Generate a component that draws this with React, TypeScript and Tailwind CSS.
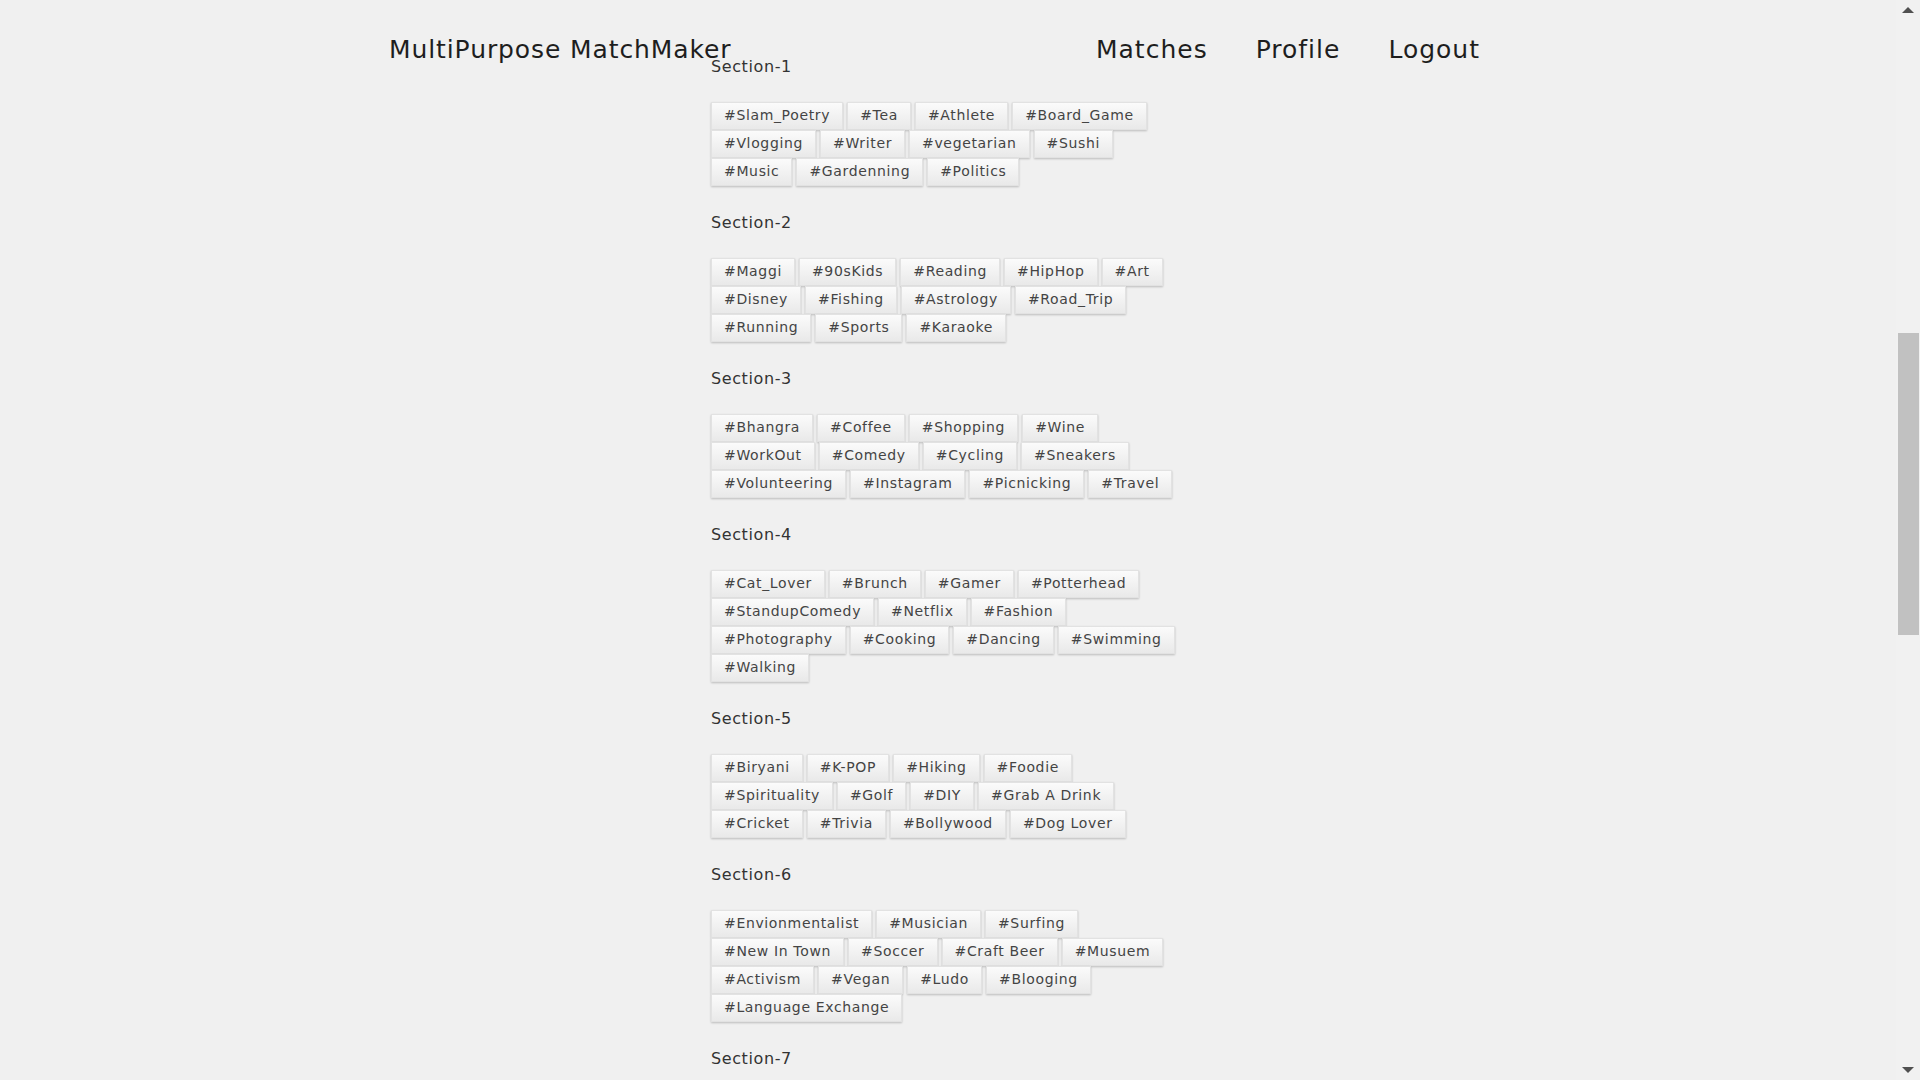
import React from "react";

const sections: string[][] = [
  ["#Slam_Poetry", "#Tea", "#Athlete", "#Board_Game", "#Vlogging", "#Writer", "#vegetarian", "#Sushi", "#Music", "#Gardenning", "#Politics"],
  ["#Maggi", "#90sKids", "#Reading", "#HipHop", "#Art", "#Disney", "#Fishing", "#Astrology", "#Road_Trip", "#Running", "#Sports", "#Karaoke"],
  ["#Bhangra", "#Coffee", "#Shopping", "#Wine", "#WorkOut", "#Comedy", "#Cycling", "#Sneakers", "#Volunteering", "#Instagram", "#Picnicking", "#Travel"],
  ["#Cat_Lover", "#Brunch", "#Gamer", "#Potterhead", "#StandupComedy", "#Netflix", "#Fashion", "#Photography", "#Cooking", "#Dancing", "#Swimming", "#Walking"],
  ["#Biryani", "#K-POP", "#Hiking", "#Foodie", "#Spirituality", "#Golf", "#DIY", "#Grab A Drink", "#Cricket", "#Trivia", "#Bollywood", "#Dog Lover"],
  ["#Envionmentalist", "#Musician", "#Surfing", "#New In Town", "#Soccer", "#Craft Beer", "#Musuem", "#Activism", "#Vegan", "#Ludo", "#Blooging", "#Language Exchange"],
  [],
];

const font = { fontFamily: '"DejaVu Sans", "Liberation Sans", sans-serif' };

export default function App() {
  return (
    <div className="w-[1920px] h-[1080px] overflow-hidden bg-[#f0f0f0] flex" style={font}>
      <main className="flex-1 flex flex-col">
        <header className="h-[65px] pt-[34px] pl-[389px] pr-[416px] flex justify-between items-start relative z-10">
          <div className="text-[25px] leading-[32px] tracking-[0.9px] text-[#1e1e1e]">MultiPurpose MatchMaker</div>
          <nav className="flex gap-[48px] text-[25px] leading-[32px] tracking-[1px] text-[#1e1e1e]">
            <span>Matches</span>
            <span>Profile</span>
            <span>Logout</span>
          </nav>
        </header>
        <div className="-mt-[8.5px] ml-[711px] w-[478px] flex flex-col">
          {sections.map((tags, i) => (
            <section key={i} className="mb-[27px]">
              <h3 className="text-[16px] leading-[20px] tracking-[0.6px] text-[#333] mb-[25px]">Section-{i + 1}</h3>
              <div className="flex flex-wrap gap-x-[4px]">
                {tags.map((t) => (
                  <span
                    key={t}
                    className="h-[28px] px-[12px] flex items-center text-[14px] tracking-[0.65px] text-[#444] whitespace-nowrap border border-[#e2e2e2] bg-gradient-to-b from-[#fbfbfb] to-[#e9e9e9] shadow-[0_1px_2px_rgba(0,0,0,0.22)]"
                  >
                    {t}
                  </span>
                ))}
              </div>
            </section>
          ))}
        </div>
      </main>
      <aside className="w-[24px] h-full bg-[#f1f1f1] flex flex-col items-center">
        <div className="h-[20px] flex items-center justify-center">
          <div className="w-0 h-0 border-l-[6px] border-r-[6px] border-b-[6px] border-l-transparent border-r-transparent border-b-[#505050]" />
        </div>
        <div className="h-[313px]" />
        <div className="w-[21px] h-[302px] bg-[#c1c1c1]" />
        <div className="flex-1" />
        <div className="h-[20px] flex items-center justify-center">
          <div className="w-0 h-0 border-l-[6px] border-r-[6px] border-t-[6px] border-l-transparent border-r-transparent border-t-[#505050]" />
        </div>
      </aside>
    </div>
  );
}
